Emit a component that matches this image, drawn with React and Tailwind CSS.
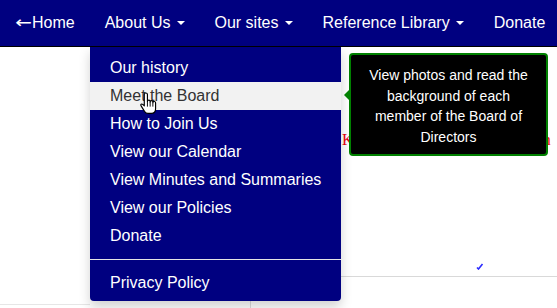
import React from 'react';

const navItems = [
  { label: 'Home', arrow: true, caret: false },
  { label: 'About Us', caret: true },
  { label: 'Our sites', caret: true },
  { label: 'Reference Library', caret: true },
  { label: 'Donate', caret: false },
];

const aboutLinks = [
  'Our history',
  'Meet the Board',
  'How to Join Us',
  'View our Calendar',
  'View Minutes and Summaries',
  'View our Policies',
  'Donate',
];

function Caret() {
  return (
    <span className="ml-[6px] inline-block w-0 h-0 border-l-[4px] border-r-[4px] border-t-[4px] border-l-transparent border-r-transparent border-t-white align-middle" />
  );
}

function HandCursor() {
  return (
    <svg width="20" height="23" viewBox="0 0 19 22" className="absolute left-[139px] top-[92px]">
      <path
        d="M5 2.5a1.5 1.5 0 0 1 3 0V9a1.3 1.3 0 0 1 2.6 0v0.5a1.3 1.3 0 0 1 2.6 0v0.7a1.3 1.3 0 0 1 2.6 0.3V16c0 2.5-1.5 4.5-4 4.5H8.5c-1.5 0-2.5-0.8-3.3-2L1.8 13c-0.6-0.9 0.6-2 1.6-1.2L5 13.2Z"
        fill="#fff"
        stroke="#000"
        strokeWidth="1.1"
        strokeLinejoin="round"
      />
      <path d="M8 9v5M10.6 9.5v4.5M13.2 10.2v3.8" stroke="#000" strokeWidth="0.9" />
    </svg>
  );
}

export default function App() {
  return (
    <div className="relative w-[557px] h-[308px] overflow-hidden bg-white font-['Liberation_Sans',Arial,sans-serif]">
      {/* top navigation */}
      <nav className="flex h-[47px] items-center bg-[#000080] border-b border-black">
        {navItems.map((item) => (
          <a key={item.label} className="flex items-center px-[15px] text-[16px] text-white leading-none whitespace-nowrap">
            {item.arrow && (
              <span className="inline-block w-[17px]">
                <span className="inline-block origin-left scale-x-125 font-['DejaVu_Sans',sans-serif] text-[16px]">←</span>
              </span>
            )}
            {item.label}
            {item.caret && <Caret />}
          </a>
        ))}
      </nav>

      {/* page body peeking behind the menu */}
      <div className="flex flex-col">
        <p className="pl-[342px] pt-[84px] whitespace-nowrap text-[16px] leading-[18px] text-red-600 font-['Liberation_Serif',serif]">
          Keeping up with the Association
        </p>
        <div className="flex justify-end pr-[73px] pt-[114px]">
          <svg width="8" height="7" viewBox="0 0 8 7">
            <path d="M1 4.5l1.5 1.5L6.5 1" stroke="#2b2bff" strokeWidth="1.6" fill="none" />
          </svg>
        </div>
        <div className="ml-[341px] mt-[6px] h-px bg-[#d9d9d9]" />
        <div className="flex mt-[21px] h-[10px]">
          <div className="w-[90px] border-t border-[#e6e6e6] mt-[6px]" />
          <div className="ml-[160px] w-px bg-[#dddddd]" />
        </div>
      </div>

      {/* About Us dropdown */}
      <div className="absolute left-[90px] top-[47px] w-[251px] bg-[#000080] rounded-b-[4px] shadow-[0_6px_12px_rgba(0,0,0,0.18)] pt-[7px] pb-[4px]">
        {aboutLinks.map((link, i) => (
          <div
            key={link}
            className={`h-[28px] flex items-center pl-[20px] text-[16px] ${
              i === 1 ? 'bg-[#f2f2f2] text-[#333333]' : 'text-white'
            }`}
          >
            {link}
          </div>
        ))}
        <div className="my-[9px] h-px bg-[#e5e5e5]" />
        <div className="h-[28px] flex items-center pl-[20px] text-[16px] text-white">Privacy Policy</div>
      </div>

      {/* tooltip */}
      <div className="absolute left-[349px] top-[53px] w-[199px] h-[103px] bg-black border-2 border-[#008000] rounded-[4px] pt-[10px] text-center text-[14px] leading-[20.5px] text-white">
        View photos and read the
        <br />
        background of each
        <br />
        member of the Board of
        <br />
        Directors
        <span className="absolute left-[-7px] top-[35px] w-0 h-0 border-t-[5px] border-b-[5px] border-r-[5px] border-t-transparent border-b-transparent border-r-[#008000]" />
      </div>

      <HandCursor />
    </div>
  );
}
